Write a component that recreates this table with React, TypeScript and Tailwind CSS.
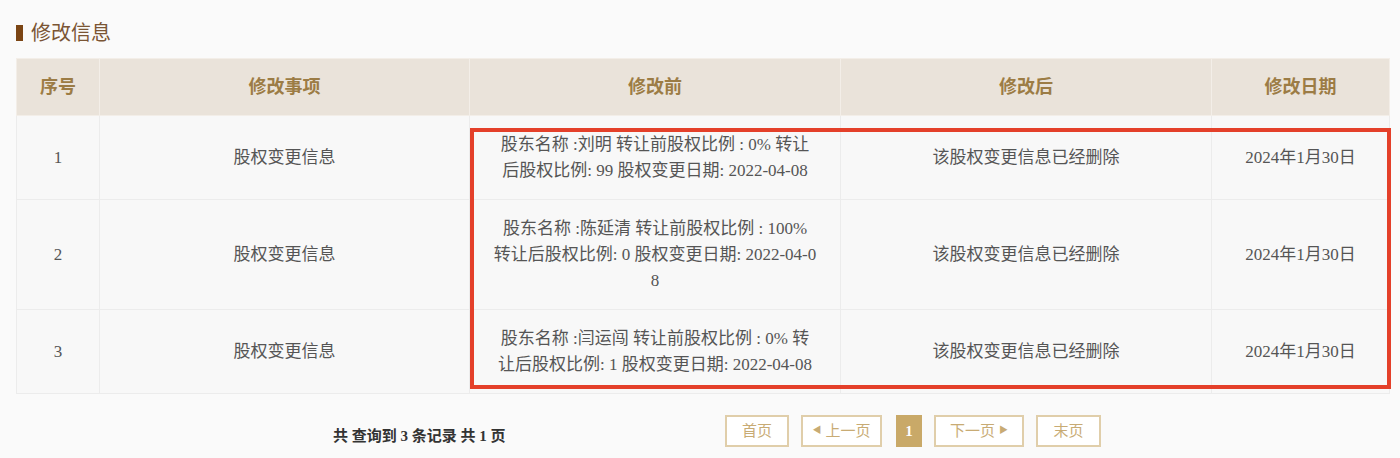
const rows = [
  {
    no: '1',
    item: '股权变更信息',
    before: ['股东名称 :刘明 转让前股权比例 : 0% 转让', '后股权比例: 99 股权变更日期: 2022-04-08'],
    after: '该股权变更信息已经删除',
    date: '2024年1月30日',
  },
  {
    no: '2',
    item: '股权变更信息',
    before: ['股东名称 :陈延清 转让前股权比例 : 100%', '转让后股权比例: 0 股权变更日期: 2022-04-0', '8'],
    after: '该股权变更信息已经删除',
    date: '2024年1月30日',
  },
  {
    no: '3',
    item: '股权变更信息',
    before: ['股东名称 :闫运闯 转让前股权比例 : 0% 转', '让后股权比例: 1 股权变更日期: 2022-04-08'],
    after: '该股权变更信息已经删除',
    date: '2024年1月30日',
  },
];

const headers = ['序号', '修改事项', '修改前', '修改后', '修改日期'];

export default function App() {
  return (
    <div className="w-[1400px] h-[458px] bg-[#fafafa] font-['Liberation_Serif','Noto_Sans_CJK_SC',serif] overflow-hidden">
      <div className="flex items-center pt-[21px] pl-4 h-[44px]">
        <div className="shrink-0 w-[7px] min-w-[7px] h-[16px] bg-[#7b4514] mr-[8px]" />
        <span className="text-[20px] leading-[22px] text-[#7a5534]">修改信息</span>
      </div>

      <div className="relative mt-[14px] ml-4 w-[1373px]">
        <table className="w-full table-fixed border-collapse text-center">
          <colgroup>
            <col className="w-[83px]" />
            <col className="w-[370px]" />
            <col className="w-[371px]" />
            <col className="w-[371px]" />
            <col className="w-[178px]" />
          </colgroup>
          <thead>
            <tr className="h-[57px] bg-[#eae3da]">
              {headers.map((h) => (
                <th key={h} className="border border-[#f3eee8] text-[18px] font-bold text-[#9c7c45]">
                  {h}
                </th>
              ))}
            </tr>
          </thead>
          <tbody className="bg-[#f8f8f8] text-[#555] text-[17px] leading-[26px]">
            {rows.map((r) => (
              <tr key={r.no}>
                <td className="border border-[#ececec] pt-4 pb-[15px]">{r.no}</td>
                <td className="border border-[#ececec] pt-4 pb-[15px]">{r.item}</td>
                <td className="border border-[#ececec] pt-4 pb-[15px] px-2">
                  {r.before.map((l, i) => (
                    <div key={i}>{l}</div>
                  ))}
                </td>
                <td className="border border-[#ececec] pt-4 pb-[15px]">{r.after}</td>
                <td className="border border-[#ececec] pt-4 pb-[15px]">{r.date}</td>
              </tr>
            ))}
          </tbody>
        </table>
        <div className="absolute left-[454px] top-[70px] w-[921px] h-[261px] border-4 border-[#e4402a]" />
      </div>

      <div className="flex items-center mt-[21px] h-[32px]">
        <span className="w-[725px] pl-[333px] pt-[10px] text-[15px] font-bold text-[#333]">共 查询到 3 条记录 共 1 页</span>
        <div className="flex items-center text-[15px] text-[#c8ab74]">
          <span className="w-[64px] h-[32px] flex items-center justify-center border-2 border-[#e0ceaa] bg-white">首页</span>
          <span className="ml-3 w-[81px] h-[32px] flex items-center justify-center border-2 border-[#e0ceaa] bg-white">
            <span className="text-[9px] mr-1">◀</span>上一页
          </span>
          <span className="ml-[14px] w-[26px] h-[32px] flex items-center justify-center bg-[#c9a968] text-white font-bold">1</span>
          <span className="ml-3 w-[90px] h-[32px] flex items-center justify-center border-2 border-[#e0ceaa] bg-white">
            下一页<span className="text-[9px] ml-1">▶</span>
          </span>
          <span className="ml-3 w-[65px] h-[32px] flex items-center justify-center border-2 border-[#e0ceaa] bg-white">末页</span>
        </div>
      </div>
    </div>
  );
}
